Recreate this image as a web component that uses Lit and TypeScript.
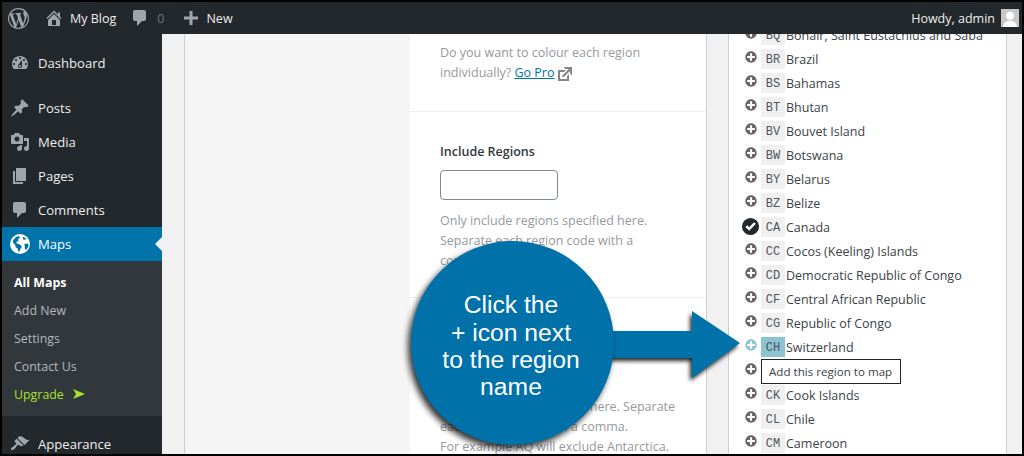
import { LitElement, html, css, svg } from "lit";
import { customElement } from "lit/decorators.js";

const D = {
  wp: "M20 10c0-5.51-4.49-10-10-10C4.48 0 0 4.49 0 10c0 5.52 4.48 10 10 10 5.51 0 10-4.48 10-10zM7.78 15.37L4.37 6.22c.55-.02 1.17-.08 1.17-.08.5-.06.44-1.13-.06-1.11 0 0-1.45.11-2.37.11-.18 0-.37 0-.58-.01C4.12 2.69 6.87 1.11 10 1.11c2.33 0 4.45.87 6.05 2.34-.68-.11-1.65.39-1.65 1.58 0 .74.45 1.36.9 2.1.35.61.55 1.36.55 2.46 0 1.49-1.4 5-1.4 5l-3.03-8.37c.54-.02.82-.17.82-.17.5-.05.44-1.25-.06-1.22 0 0-1.44.12-2.38.12-.87 0-2.33-.12-2.33-.12-.5-.03-.56 1.2-.06 1.22l.92.08 1.26 3.41zM17.41 10c.24-.64.74-1.87.43-4.25.7 1.29 1.05 2.71 1.05 4.25 0 3.29-1.73 6.24-4.4 7.78.97-2.59 1.94-5.2 2.92-7.78zM6.1 18.09C3.12 16.65 1.11 13.53 1.11 10c0-1.3.23-2.48.72-3.59C3.25 10.3 4.67 14.2 6.1 18.09zm4.03-6.63l2.58 6.98c-.86.29-1.76.45-2.71.45-.79 0-1.57-.11-2.29-.33.81-2.38 1.62-4.74 2.42-7.1z",
  home: "M16 8.5l1.53 1.53-1.06 1.06L10 4.62l-6.47 6.47-1.06-1.06L10 2.5l4 4v-2h2v4zm-6-2.46l6 5.99V18H4v-5.97zM12 17v-5H8v5h4z",
  comment: "M5 2h9c1.1 0 2 .9 2 2v7c0 1.1-.9 2-2 2h-2l-5 5v-5H5c-1.1 0-2-.9-2-2V4c0-1.1.9-2 2-2z",
  plus: "M17 8.500v3h-5.500V17h-3v-5.500H3v-3h5.500V3h3v5.500z",
  dash: "M3.76 16h12.48c1.1-1.37 1.76-3.11 1.76-5 0-4.42-3.58-8-8-8s-8 3.58-8 8c0 1.89.66 3.63 1.76 5zM10 4c.55 0 1 .45 1 1s-.45 1-1 1-1-.45-1-1 .45-1 1-1zM6 6c.55 0 1 .45 1 1s-.45 1-1 1-1-.45-1-1 .45-1 1-1zm8 0c.55 0 1 .45 1 1s-.45 1-1 1-1-.45-1-1 .45-1 1-1zm-5.37 5.55L12 7v6c0 1.1-.9 2-2 2s-2-.9-2-2c0-.57.24-1.08.63-1.45zM4 10c.55 0 1 .45 1 1s-.45 1-1 1-1-.45-1-1 .45-1 1-1zm12 0c.55 0 1 .45 1 1s-.45 1-1 1-1-.45-1-1 .45-1 1-1zm-5 3c0-.55-.45-1-1-1s-1 .45-1 1 .45 1 1 1 1-.45 1-1z",
  post: "M10.44 3.02l1.82-1.82 6.36 6.35-1.83 1.82c-1.05-.68-2.48-.57-3.41.36l-.75.75c-.92.93-1.04 2.35-.35 3.41l-1.83 1.82-2.41-2.41-2.8 2.79c-.42.42-3.38 2.71-3.8 2.29s1.86-3.39 2.28-3.81l2.79-2.79L4.1 9.36l1.83-1.82c1.05.69 2.48.57 3.4-.36l.75-.75c.93-.92 1.05-2.35.36-3.41z",
  media: "M13 11V4c0-.55-.45-1-1-1h-1.67L9 1H5L3.67 3H2c-.55 0-1 .45-1 1v7c0 .55.45 1 1 1h10c.55 0 1-.45 1-1zM7 4.500c1.38 0 2.500 1.120 2.500 2.500S8.380 9.500 7 9.500 4.500 8.380 4.500 7 5.620 4.500 7 4.500zM14 6h5v10.500c0 1.380-1.120 2.500-2.500 2.500S14 17.880 14 16.500s1.120-2.500 2.500-2.500c.17 0 .34.02.5.05V9h-3V6zm-4 8.050V13h2v3.500c0 1.380-1.120 2.500-2.500 2.500S7 17.880 7 16.500 8.120 14 9.500 14c.17 0 .34.02.5.05z",
  page: "M6 15V2h10v13H6zm-1 1h8v2H3V5h2v11z",
  brush: "M14.48 11.06L7.41 3.99l1.5-1.5c.5-.56 2.3-.47 3.51.32 1.21.8 1.43 1.28 2.91 2.1 1.18.64 2.45 1.26 4.45.85zm-.71.71L6.7 4.7 4.93 6.47c-.39.39-.39 1.02 0 1.41l1.06 1.06c.39.39.39 1.03 0 1.42-.6.6-1.43 1.11-2.21 1.69-.35.26-.7.53-1.01.84C1.43 13.23.4 14.98 1.21 15.8c.87.87 2.57-.2 3.91-1.55.31-.31.58-.66.85-1.02.57-.78 1.08-1.61 1.69-2.21.39-.39 1.02-.39 1.41 0l1.06 1.06c.39.39 1.02.39 1.41 0z",
  external: "M9 3h8v8l-2-1V6.92l-6.6 6.6-1.42-1.42L13.68 5H10zm3 12v-3l2-2v7H3V6h8L9 8H5v7h7z",
  plusAlt: "M15.8 4.2c3.2 3.21 3.2 8.39 0 11.6-3.21 3.2-8.39 3.2-11.6 0C1 12.59 1 7.41 4.2 4.2 7.41 1 12.59 1 15.8 4.2zm-4.3 11.3v-4h4v-3h-4v-4h-3v4h-4v3h4v4h3z",
  check: "M10 1a9 9 0 1 0 0 18 9 9 0 0 0 0-18zm-1.3 13.6L4.6 10.5l1.9-1.9 2.2 2.2 4.900-5.400 2 1.800z",
};

const ic = (d: string, size: number, cls = "") => html`<svg class="ic ${cls}" width=${size} height=${size} viewBox="0 0 20 20" aria-hidden="true">${svg`<path d=${d}></path>`}</svg>`;

const globe = html`<svg class="globe" width="20" height="20" viewBox="0 0 20 20" aria-hidden="true">
  <circle cx="10" cy="10" r="10" fill="#fff"></circle>
  <path fill="#0073aa" d="M3 6.2 6.6 2.6l2.6-.4.8 1.4-1.8 1.500.5 1.700-2 .9-.3 1.600 2.400.7 2 1.300 1 1.600-1.400 2.200-1 2.500-1.200-.2-.5-3-2-1.200-.6-2.400L3 8.500zM13 2.600l3.300 2.200-1.300 1-2-.4zM14.400 10l3.600-.6.6 2.600-2 3.600-1.600-.2-.2-3z"></path>
</svg>`;

const menuA: [string, string][] = [["Posts", D.post], ["Media", D.media], ["Pages", D.page], ["Comments", D.comment]];
const regions: [string, string][] = [
  ["BQ", "Bonair, Saint Eustachius and Saba"], ["BR", "Brazil"], ["BS", "Bahamas"], ["BT", "Bhutan"],
  ["BV", "Bouvet Island"], ["BW", "Botswana"], ["BY", "Belarus"], ["BZ", "Belize"], ["CA", "Canada"],
  ["CC", "Cocos (Keeling) Islands"], ["CD", "Democratic Republic of Congo"], ["CF", "Central African Republic"],
  ["CG", "Republic of Congo"], ["CH", "Switzerland"], ["", ""], ["CK", "Cook Islands"], ["CL", "Chile"], ["CM", "Cameroon"],
];

@customElement("app-root")
export class AppRoot extends LitElement {
  static styles = css`
    :host { display: block; width: 1024px; height: 456px; font-family: "Open Sans", sans-serif; }
    * { box-sizing: border-box; }
    .frame { position: relative; width: 1024px; height: 456px; background: #000; padding: 2px; overflow: hidden; display: flex; flex-direction: column; }
    .ic { display: block; flex: none; fill: currentColor; }
    .bar { height: 32px; flex: none; background: #23282d; color: #eee; display: flex; align-items: center; font-size: 12.5px; }
    .bar .wp { color: #a0a5aa; margin-left: 6px; }
    .bar .home { color: #a0a5aa; margin-left: 15px; }
    .bar .blog { margin-left: 6px; }
    .bar .bub { color: #a0a5aa; margin-left: 14px; }
    .bar .zero { color: #72777c; margin-left: 7px; }
    .bar .pl { color: #a0a5aa; margin-left: 17px; }
    .bar .new { margin-left: 5px; }
    .bar .howdy { margin-left: auto; }
    .avatar { width: 18px; height: 18px; margin: 0 3px 0 6px; background: #c8c8c8; display: flex; }
    .main { flex: 1; min-height: 0; display: flex; }
    .side { width: 160px; flex: none; background: #23282d; padding-top: 12px; overflow: hidden; color: #eee; font-size: 13.1px; }
    .mi { height: 34px; display: flex; align-items: center; gap: 8px; padding-left: 8px; color: #eee; position: relative; }
    .mi .ic { color: #a0a5aa; }
    .mi.sep { margin-bottom: 11px; }
    .mi.on { background: #0073aa; color: #fff; }
    .mi.on::after { content: ""; position: absolute; right: 0; top: 10px; border: 7px solid transparent; border-right-color: #f1f1f1; border-left: 0; }
    .globe { display: block; flex: none; }
    .sub { background: #32373c; padding: 7px 0 8px; margin-bottom: 11px; font-size: 12.4px; color: #b4b9be; }
    .sub div { height: 28px; display: flex; align-items: center; padding-left: 12px; }
    .sub .cur { color: #fff; font-weight: 700; }
    .sub .up { color: #a6e22c; gap: 9px; }
    .content { flex: 1; min-width: 0; background: #f1f1f1; display: flex; overflow: hidden; padding-left: 22px; }
    .wash { width: 226px; flex: none; background: #f5f5f5; border-left: 1px solid #ccd0d4; }
    .panel { width: 297px; flex: none; background: #fff; border-right: 1px solid #ccd0d4; font-size: 12.5px; line-height: 20px; color: #96999c; display: flex; flex-direction: column; }
    .sec { padding: 0 30px; border-bottom: 1px solid #eee; flex: none; }
    .s1 { height: 78px; padding-top: 9px; }
    .s2 { height: 186px; padding-top: 30px; }
    .s3 { padding-top: 99px; border-bottom: 0; white-space: nowrap; }
    .lab { color: #32373c; font-weight: 600; line-height: 20px; }
    .inp { width: 118px; height: 30px; border: 1px solid #7e8993; border-radius: 4px; background: #fff; margin: 8px 0 11px; }
    a { color: #0073aa; text-decoration: underline; }
    .ext { display: inline-block; vertical-align: -5px; color: #82878c; margin: -2px 0; }
    .card { width: 279px; flex: none; margin-left: 21px; background: #fff; border: 1px solid #ccd0d4; border-width: 0 1px; overflow: hidden; padding-left: 13px; color: #3c4247; font-size: 12.5px; }
    .rows { margin-top: -11px; }
    .r { height: 24px; display: flex; align-items: center; position: relative; }
    .r .slot { width: 18px; margin-right: 1px; display: flex; justify-content: center; color: #6b6367; transform: translateY(-2px); }
    .code { width: 24px; height: 20px; background: #f0f0f1; margin-right: 1px; font: 12px/22px "Liberation Mono", monospace; text-align: center; color: #50555a; }
    .r.hot .slot { color: #8fc5d6; }
    .r.hot .code { background: #8cc3d1; }
    .r.done .slot { color: #23282d; transform: translate(-1px, -1px); }
    .tip { position: absolute; left: 19px; top: 0; width: 140px; height: 25px; background: #fff; border: 1px solid #222; font-size: 11.6px; line-height: 23px; padding-left: 7px; white-space: nowrap; }
    .arrow { position: absolute; left: 600px; top: 300px; filter: drop-shadow(-2px 3px 2px rgba(0,0,0,.85)); }
    .bubble { position: absolute; left: 411px; top: 241px; width: 203px; height: 204px; border-radius: 50%; background: #0071a9; box-shadow: -3px 4px 6px rgba(0,0,0,.8); color: #fff; font: 24.7px/27.3px "Liberation Sans", Arial, sans-serif; text-align: center; display: flex; align-items: center; justify-content: center; padding: 6px 3px 0 0; }
  `;

  render() {
    return html`<div class="frame">
      <div class="bar">
        ${ic(D.wp, 21, "wp")}${ic(D.home, 20, "home")}<span class="blog">My Blog</span>
        ${ic(D.comment, 20, "bub")}<span class="zero">0</span>${ic(D.plus, 20, "pl")}<span class="new">New</span>
        <span class="howdy">Howdy, admin</span>
        <span class="avatar"><svg width="18" height="18" viewBox="0 0 16 16" aria-hidden="true"><circle cx="8" cy="6" r="3.5" fill="#fff"></circle><path d="M2 16c0-4 3-5.500 6-5.500s6 1.500 6 5.500z" fill="#fff"></path></svg></span>
      </div>
      <div class="main">
        <nav class="side">
          <div class="mi sep">${ic(D.dash, 20)}<span>Dashboard</span></div>
          ${menuA.map(([t, d]) => html`<div class="mi">${ic(d, 20)}<span>${t}</span></div>`)}
          <div class="mi on">${globe}<span>Maps</span></div>
          <div class="sub">
            <div class="cur">All Maps</div><div>Add New</div><div>Settings</div><div>Contact Us</div>
            <div class="up">Upgrade <svg width="12" height="10" viewBox="0 0 12 10" aria-hidden="true"><path d="M0 0l12 5-12 5 3-5z" fill="#a6e22c"></path></svg></div>
          </div>
          <div class="mi">${ic(D.brush, 20)}<span>Appearance</span></div>
        </nav>
        <div class="content">
          <div class="wash"></div>
          <div class="panel">
            <div class="sec s1">Do you want to colour each region individually? <a>Go Pro</a>${ic(D.external, 20, "ext")}</div>
            <div class="sec s2">
              <div class="lab">Include Regions</div>
              <div class="inp"></div>
              Only include regions specified here. Separate each region code with a comma.
            </div>
            <div class="sec s3">Exclude regions specified here. Separate<br />each region code with a comma.<br />For example AQ will exclude Antarctica.</div>
          </div>
          <div class="card"><div class="rows">
            ${regions.map(([c, n]) => {
              const done = c === "CA", hot = c === "CH";
              return html`<div class="r ${done ? "done" : ""} ${hot ? "hot" : ""}">
                <span class="slot">${done ? ic(D.check, 19) : ic(D.plusAlt, 14)}</span>
                ${c ? html`<span class="code">${c}</span><span>${n}</span>` : html`<span class="tip">Add this region to map</span>`}
              </div>`;
            })}
          </div></div>
        </div>
      </div>
      <svg class="arrow" width="150" height="90" viewBox="600 300 150 90" aria-hidden="true"><path d="M600 331h92v-20l48 32-48 35v-20h-92z" fill="#0071a9"></path></svg>
      <div class="bubble"><div>Click the<br />+ icon next<br />to the region<br />name</div></div>
    </div>`;
  }
}
